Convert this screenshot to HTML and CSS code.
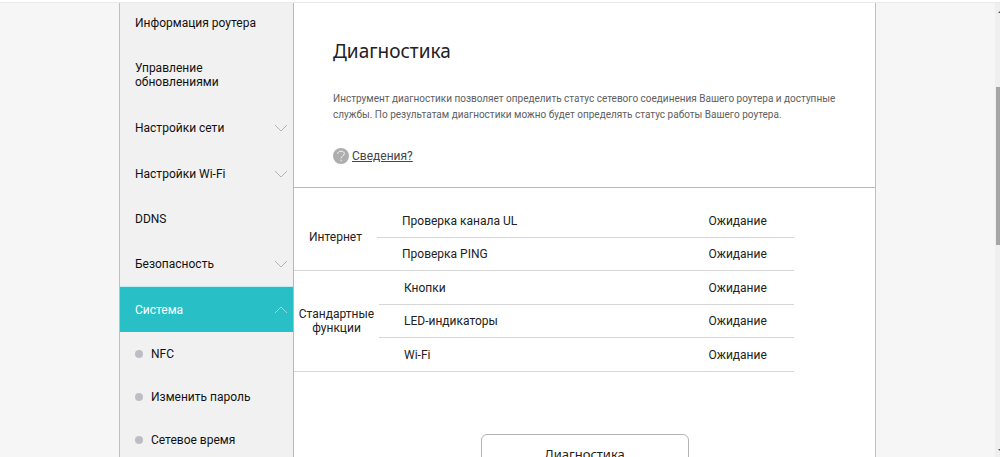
FILE: index.html
```html
<!DOCTYPE html>
<html lang="ru">
<head>
<meta charset="utf-8">
<title>Диагностика</title>
<link rel="stylesheet" href="styles.css">
</head>
<body>
<div class="window">
  <div class="page">
    <div class="layout">
      <nav class="sidebar">
        <a class="item item-first" href="#">Информация роутера</a>
        <a class="item item-tall" href="#">Управление обновлениями</a>
        <a class="item" href="#">Настройки сети
          <svg class="chevron" viewBox="0 0 14 8"><path d="M1 1l6 6 6-6"/></svg></a>
        <a class="item" href="#">Настройки Wi-Fi
          <svg class="chevron" viewBox="0 0 14 8"><path d="M1 1l6 6 6-6"/></svg></a>
        <a class="item" href="#">DDNS</a>
        <a class="item" href="#">Безопасность
          <svg class="chevron" viewBox="0 0 14 8"><path d="M1 1l6 6 6-6"/></svg></a>
        <a class="item item-active" href="#">Система
          <svg class="chevron" viewBox="0 0 14 8"><path d="M1 7l6-6 6 6"/></svg></a>
        <a class="subitem" href="#">NFC</a>
        <a class="subitem" href="#">Изменить пароль</a>
        <a class="subitem" href="#">Сетевое время</a>
      </nav>
      <main class="main">
        <header class="intro">
          <h1 class="title">Диагностика</h1>
          <p class="description">Инструмент диагностики позволяет определить статус сетевого соединения Вашего роутера и доступные службы. По результатам диагностики можно будет определять статус работы Вашего роутера.</p>
          <a class="details" href="#">
            <svg class="help" viewBox="0 0 16 16"><circle cx="8" cy="8" r="8"/><path d="M4.700 5.800C4.800 4 6.200 3.200 8 3.200c1.900 0 3.300.9 3.300 2.500 0 2.200-3.200 2.300-3.200 4.600M8.100 11.700v1.600"/></svg>
            <span class="details-text">Сведения?</span>
          </a>
        </header>
        <section class="checks">
          <table class="group">
            <tbody>
              <tr><th class="group-name" rowspan="2" scope="rowgroup">Интернет</th><td class="check">Проверка канала UL</td><td class="status">Ожидание</td></tr>
              <tr><td class="check">Проверка PING</td><td class="status">Ожидание</td></tr>
            </tbody>
          </table>
          <table class="group group-standard">
            <tbody>
              <tr><th class="group-name" rowspan="3" scope="rowgroup">Стандартные функции</th><td class="check">Кнопки</td><td class="status">Ожидание</td></tr>
              <tr><td class="check">LED-индикаторы</td><td class="status">Ожидание</td></tr>
              <tr><td class="check">Wi-Fi</td><td class="status">Ожидание</td></tr>
            </tbody>
          </table>
        </section>
        <button class="run" type="button">Диагностика</button>
      </main>
    </div>
  </div>
  <div class="scrollbar">
    <svg class="arrow" viewBox="0 0 2 2"><path d="M0 2L2 0v2z"/></svg>
    <div class="thumb"></div>
    <svg class="arrow arrow-down" viewBox="0 0 2 2"><path d="M0 0h2v2z"/></svg>
  </div>
</div>
</body>
</html>
```
FILE: styles.css
```css
* { box-sizing: border-box; }

body {
  margin: 0;
  background: #fff;
  color: #222;
  font: 12px/14px Roboto, "Noto Sans", sans-serif;
}

a { color: inherit; text-decoration: none; }

.window {
  display: flex;
  height: 100vh;
  padding-top: 2px;
  overflow: hidden;
}

.page {
  flex: 1;
  border-top: 1px solid #e9e9e9;
  background: #f6f6f6;
  overflow: hidden;
}

.layout {
  display: flex;
  max-width: 757px;
  min-height: 100%;
  margin: 0 auto;
  border: solid #c0c0c0;
  border-width: 0 1px;
}

.sidebar {
  flex: 0 0 174px;
  border-right: 1px solid #b8b8b8;
  background: #f1f1f1;
  color: #111;
}

.item {
  display: flex;
  align-items: center;
  justify-content: space-between;
  height: 45px;
  padding: 0 5px 0 15px;
}

.item-first { height: 42px; padding-bottom: 2px; }
.item-tall { height: 60px; padding-right: 60px; }

.item-active {
  height: 46px;
  border: solid #c4ecee;
  border-width: 1px 0 0;
  background: #29bfc6;
  color: #fff;
}

.item-tall + .item { height: 46px; }

.chevron {
  width: 14px;
  height: 8px;
  fill: none;
  stroke: #b4b4b4;
  stroke-width: 1;
}

.item-active .chevron { stroke: #8adde1; }

.subitem {
  display: flex;
  align-items: center;
  gap: 8px;
  height: 43px;
  padding-left: 15px;
}

.subitem::before {
  content: "";
  width: 8px;
  height: 8px;
  border-radius: 50%;
  background: #bdbdc5;
}

.main {
  flex: 1;
  display: flex;
  flex-direction: column;
  background: #fff;
}

.intro {
  padding: 34px 32px 20px 39px;
  border-bottom: 1px solid #b8b8b8;
}

.title {
  margin: 0;
  font: 400 19px/28px "Noto Sans", "Open Sans", sans-serif;
}

.description {
  max-width: 510px;
  margin: 26px 0 25px;
  color: #606060;
  font-size: 10px;
  line-height: 16px;
}

.details {
  display: inline-flex;
  align-items: center;
  gap: 3px;
  color: #444;
}

.details-text { text-decoration: underline; }

.help { width: 16px; height: 16px; }
.help circle { fill: #aeaeae; }
.help path { fill: none; stroke: #f4f4f4; stroke-width: 1; }

.checks {
  width: 86%;
  padding-top: 16px;
}

.group {
  width: 100%;
  border-collapse: separate;
  border-spacing: 0;
  table-layout: fixed;
}

.group th, .group td {
  height: 34px;
  padding: 0;
  border-bottom: 1px solid #d6d6d6;
  font-weight: 400;
}

.group tr:nth-child(even) td { height: 33px; }

.group .group-name { width: 83px; }
.group-standard .group-name { width: 85px; }

.group .check { padding-left: 25px; text-align: left; }
.group .status { width: 112px; text-align: center; }

.run {
  align-self: center;
  width: 208px;
  height: 40px;
  margin-top: 62px;
  border: 1px solid #b4b4b4;
  border-radius: 6px;
  background: #fff;
  color: #222;
  font: 13px/20px "Noto Sans", "Open Sans", sans-serif;
}

.scrollbar {
  display: flex;
  flex-direction: column;
  flex: 0 0 5px;
  padding: 8px 0 6px 1px;
  border-top: 1px solid #e9e9e9;
  background: #efefef;
}

.thumb {
  height: 36%;
  margin: 74px 0 auto;
  background: #a6a6a6;
}

.arrow {
  align-self: flex-end;
  width: 2px;
  height: 2px;
  fill: #555;
}
```
